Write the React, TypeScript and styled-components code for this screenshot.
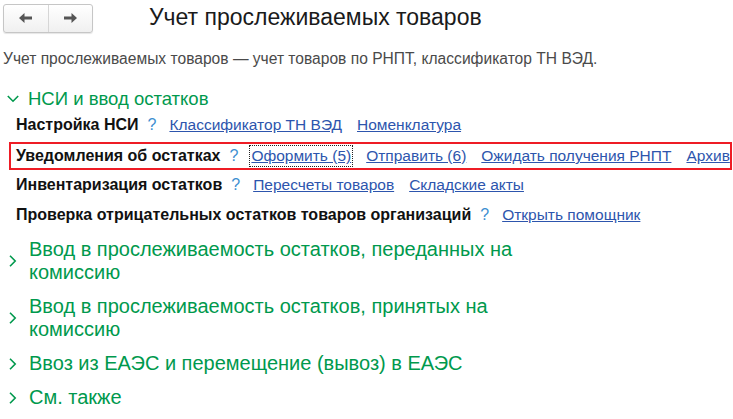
import * as React from "react";
import styled, { createGlobalStyle } from "styled-components";

const GlobalStyle = createGlobalStyle`
    html, body {
        margin: 0;
        padding: 0;
        background: #ffffff;
    }
    body {
        font-family: "Liberation Sans", Arial, sans-serif;
        color: #333333;
    }
`;

type LinkItem = { text: string; focused?: boolean };

type Row = { title: string; links: LinkItem[]; highlighted?: boolean };

const rows: Row[] = [
    { title: "Настройка НСИ", links: [{ text: "Классификатор ТН ВЭД" }, { text: "Номенклатура" }] },
    {
        title: "Уведомления об остатках",
        highlighted: true,
        links: [
            { text: "Оформить (5)", focused: true },
            { text: "Отправить (6)" },
            { text: "Ожидать получения РНПТ" },
            { text: "Архив" },
        ],
    },
    { title: "Инвентаризация остатков", links: [{ text: "Пересчеты товаров" }, { text: "Складские акты" }] },
    { title: "Проверка отрицательных остатков товаров организаций", links: [{ text: "Открыть помощник" }] },
];

const collapsedGroups = [
    "Ввод в прослеживаемость остатков, переданных на комиссию",
    "Ввод в прослеживаемость остатков, принятых на комиссию",
    "Ввоз из ЕАЭС и перемещение (вывоз) в ЕАЭС",
    "См. также",
];

const Page = styled.div`
    width: 733px;
    height: 419px;
    overflow: hidden;
    display: flex;
    flex-direction: column;
`;

const Header = styled.div`
    display: flex;
    align-items: center;
    height: 34px;
    padding: 2px 0 0 3px;
    box-sizing: border-box;
`;

const NavGroup = styled.div`
    display: flex;
    width: 90px;
    height: 29px;
    box-sizing: border-box;
    border: 1px solid #c6c6c6;
    border-radius: 3px;
    background: linear-gradient(#ffffff, #f0f0f0);
    box-shadow: 0 1px 1px rgba(0, 0, 0, 0.1);
`;

const NavButton = styled.div<{ $divider?: boolean }>`
    flex: 1;
    display: flex;
    align-items: center;
    justify-content: center;
    border-left: ${(p) => (p.$divider ? "1px solid #d6d6d6" : "none")};
`;

const Title = styled.h1`
    margin: 0 0 0 56px;
    font-size: 23px;
    font-weight: normal;
    color: #1a1a1a;
    line-height: 28px;
    position: relative;
    top: -1px;
`;

const Description = styled.div`
    margin: 16px 0 0 3px;
    font-size: 15.6px;
    color: #4a4a4a;
    line-height: 18px;
`;

const GroupHeader = styled.div<{ $expanded?: boolean }>`
    display: flex;
    align-items: center;
    gap: ${(p) => (p.$expanded ? "9px" : "12px")};
    padding-left: ${(p) => (p.$expanded ? "7px" : "9px")};
    font-size: ${(p) => (p.$expanded ? "18.5px" : "20px")};
    color: #00994d;
    line-height: 23px;
    width: 540px;
`;

const ChevronIcon = styled.svg<{ $w: number; $h: number }>`
    flex: none;
    width: ${(p) => p.$w}px;
    height: ${(p) => p.$h}px;
`;

const Body = styled.div`
    display: flex;
    flex-direction: column;
    margin-top: 19px;
`;

const ItemRow = styled.div<{ $highlighted?: boolean }>`
    display: flex;
    align-items: center;
    height: ${(p) => (p.$highlighted ? "28px" : "30px")};
    margin-top: ${(p) => (p.$highlighted ? "2px" : "0")};
    margin-left: ${(p) => (p.$highlighted ? "9px" : "16px")};
    padding-left: ${(p) => (p.$highlighted ? "5px" : "0")};
    border: ${(p) => (p.$highlighted ? "2px solid #ee1c25" : "none")};
    width: ${(p) => (p.$highlighted ? "723px" : "auto")};
    box-sizing: border-box;
    font-size: 15.5px;
    white-space: nowrap;
`;

const RowTitle = styled.span`
    font-weight: bold;
    font-size: 16px;
    color: #111111;
`;

const Help = styled.span`
    color: #3d8fd1;
    margin: 0 13px 0 9px;
    font-size: 16px;
`;

const Link = styled.a<{ $focused?: boolean }>`
    color: #2d55ad;
    text-decoration: underline;
    margin-right: 15px;
    cursor: pointer;
    outline: ${(p) => (p.$focused ? "1px dotted #222" : "none")};
    outline-offset: 1px;
`;

const Groups = styled.div`
    display: flex;
    flex-direction: column;
    gap: 11px;
    margin-top: 8px;
`;

const ChevronDown = () => (
    <ChevronIcon $w={12} $h={8} viewBox="0 0 12 8">
        <path d="M0.8 1 L6 6.2 L11.2 1" fill="none" stroke="#00994d" strokeWidth="1.6" />
    </ChevronIcon>
);

const ChevronRight = () => (
    <ChevronIcon $w={8} $h={12} viewBox="0 0 8 12">
        <path d="M1 0.8 L6.2 6 L1 11.2" fill="none" stroke="#00994d" strokeWidth="1.6" />
    </ChevronIcon>
);

const Arrow = ({ right }: { right?: boolean }) => (
    <svg width="15" height="12" viewBox="0 0 15 12" style={right ? undefined : { transform: "scaleX(-1)" }}>
        <path d="M1 4.5 H8.5 V1 L14 6 L8.5 11 V7.5 H1 Z" fill="#555555" />
    </svg>
);

export default function App() {
    return (
        <Page>
            <GlobalStyle />
            <Header>
                <NavGroup>
                    <NavButton>
                        <Arrow />
                    </NavButton>
                    <NavButton $divider>
                        <Arrow right />
                    </NavButton>
                </NavGroup>
                <Title>Учет прослеживаемых товаров</Title>
            </Header>
            <Description>Учет прослеживаемых товаров — учет товаров по РНПТ, классификатор ТН ВЭД.</Description>
            <Body>
                <GroupHeader $expanded>
                    <ChevronDown />
                    НСИ и ввод остатков
                </GroupHeader>
                {rows.map((row) => (
                    <ItemRow key={row.title} $highlighted={row.highlighted}>
                        <RowTitle>{row.title}</RowTitle>
                        <Help>?</Help>
                        {row.links.map((l) => (
                            <Link key={l.text} $focused={l.focused}>
                                {l.text}
                            </Link>
                        ))}
                    </ItemRow>
                ))}
            </Body>
            <Groups>
                {collapsedGroups.map((g) => (
                    <GroupHeader key={g}>
                        <ChevronRight />
                        <span>{g}</span>
                    </GroupHeader>
                ))}
            </Groups>
        </Page>
    );
}
